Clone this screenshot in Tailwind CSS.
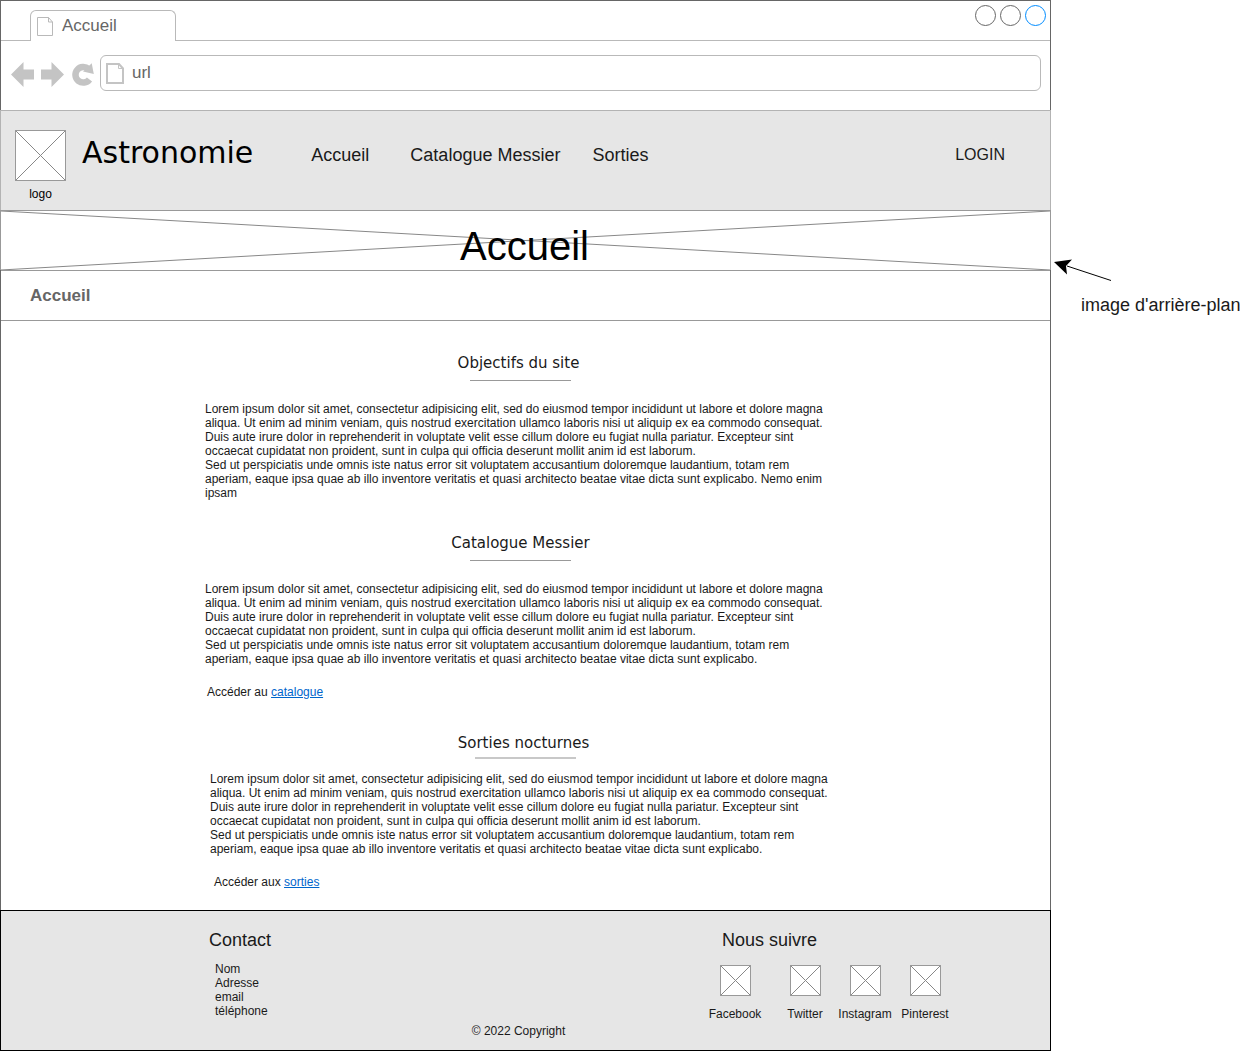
<!DOCTYPE html>
<html lang="fr">
<head>
<meta charset="utf-8">
<meta name="viewport" content="width=device-width, initial-scale=1">
<title>Accueil - Astronomie</title>
<script src="https://cdn.jsdelivr.net/npm/@tailwindcss/browser@4"></script>
</head>
<body class="flex items-start bg-white font-['Liberation_Sans',sans-serif] text-xs leading-[14px] text-black">

<!-- Crossed placeholder, stretched to its box -->
<svg class="hidden">
  <symbol id="cross" viewBox="0 0 100 100" preserveAspectRatio="none">
    <path d="M0 0L100 100M100 0L0 100" fill="none" stroke="#888" stroke-width="1" vector-effect="non-scaling-stroke"/>
  </symbol>
</svg>

<div class="min-w-0 flex-1">

  <!-- Browser chrome -->
  <div class="border-x border-t border-[#666]">
    <div class="flex h-10 items-end">
      <div class="w-[29px] self-stretch border-b border-[#b9b9b9]"></div>
      <div class="flex h-[31px] w-[146px] items-center gap-2 rounded-t-md border-x border-t border-[#b9b9b9] pl-1.5 text-[17px] leading-5 text-[#666]">
        <svg class="h-5 w-[17px] shrink-0" viewBox="0 0 17 20" fill="none" stroke="#b9b9b9"><path d="M.5 1.500H11.500L15.500 6V19.500H.5ZM11.500 1.500V6H15.500"/></svg>
        <span>Accueil</span>
      </div>
      <div class="flex flex-1 justify-end gap-1 self-stretch border-b border-[#b9b9b9] pt-1 pr-1">
        <button aria-label="Réduire" class="size-[21px] rounded-full border border-[#666]"></button>
        <button aria-label="Agrandir" class="size-[21px] rounded-full border border-[#666]"></button>
        <button aria-label="Fermer" class="size-[21px] rounded-full border border-[#008cff]"></button>
      </div>
    </div>
    <div class="flex h-[69px] items-start pt-[14px] pr-[9px] pl-2.5">
      <div class="mr-[5px] flex gap-[7px]">
        <button aria-label="Page précédente"><svg class="h-9 w-[23px]" viewBox="0 0 23 36"><path d="M0 19.500L12.500 7V14.500H23V24.500H12.500V32Z" fill="#c4c4c4"/></svg></button>
        <button aria-label="Page suivante"><svg class="h-9 w-[23px]" viewBox="0 0 23 36"><path d="M23 19.500L10.500 7V14.500H0V24.500H10.500V32Z" fill="#c4c4c4"/></svg></button>
        <button aria-label="Actualiser"><svg class="h-9 w-6" viewBox="0 0 24 36"><path d="M17.500 14A7.800 7.800 0 1 0 18.500 24.500" fill="none" stroke="#c4c4c4" stroke-width="6.500"/><path d="M20.700 8.300L22.800 19L12 16.500Z" fill="#c4c4c4"/></svg></button>
      </div>
      <div class="flex h-9 min-w-0 flex-1 items-center gap-2 rounded-md border border-[#b9b9b9] pl-[5px]">
        <label for="url" aria-label="Adresse"><svg class="h-[21px] w-[18px]" viewBox="0 0 18 21" fill="none" stroke="#c4c4c4"><path d="M1 1H13L17 5.500V20H1Z" stroke-width="2"/><path d="M12.500 1V5.500H17"/></svg></label>
        <input id="url" type="text" value="url" class="min-w-0 flex-1 text-[17px] leading-5 text-[#666] outline-none">
      </div>
    </div>
  </div>

  <!-- Site header -->
  <header class="flex h-[100px] items-start border-x border-t border-[#b3b3b3] bg-[#e6e6e6] pt-[19px] pr-[45px] pl-[14px]">
    <figure class="shrink-0 text-center">
      <div class="size-[51px] border border-[#999] bg-white"><svg class="block size-full"><use href="#cross"/></svg></div>
      <figcaption class="pt-1.5">logo</figcaption>
    </figure>
    <div class="ml-4 font-['DejaVu_Sans',sans-serif] text-[30px] leading-[46px]">Astronomie</div>
    <nav class="ml-[58px] flex text-lg leading-[50px] text-[#1a1a1a]">
      <a href="#" class="mr-[41px]">Accueil</a>
      <a href="#" class="mr-8">Catalogue Messier</a>
      <a href="#">Sorties</a>
    </nav>
    <a href="#" class="ml-auto text-base leading-[50px] text-[#1a1a1a]">LOGIN</a>
  </header>

  <!-- Banner with its background placeholder -->
  <div class="relative h-[60px] border-x border-t border-[#999] pt-3">
    <svg class="absolute inset-0 size-full"><use href="#cross"/></svg>
    <h1 class="relative pr-0.5 text-center text-[40px] leading-[47px]">Accueil</h1>
  </div>

  <div class="border-x border-[#666]">
    <div class="border-y border-[#999] pl-[29px] text-[17px] leading-[49px] font-bold text-[#666]">Accueil</div>

    <main class="flex flex-col gap-[31px] pt-[30px] pb-[21px] pl-[204px] text-[#1a1a1a]">
      <section class="max-w-[631px]">
        <h2 class="pr-1 text-center font-['DejaVu_Sans',sans-serif] text-[15px] leading-6">Objectifs du site</h2>
        <hr class="mx-auto mt-[5px] w-[101px] border-[#999]">
        <p class="mt-[21px] max-w-[622px]">Lorem ipsum dolor sit amet, consectetur adipisicing elit, sed do eiusmod tempor incididunt ut labore et dolore magna aliqua. Ut enim ad minim veniam, quis nostrud exercitation ullamco laboris nisi ut aliquip ex ea commodo consequat. Duis aute irure dolor in reprehenderit in voluptate velit esse cillum dolore eu fugiat nulla pariatur. Excepteur sint occaecat cupidatat non proident, sunt in culpa qui officia deserunt mollit anim id est laborum.<br>Sed ut perspiciatis unde omnis iste natus error sit voluptatem accusantium doloremque laudantium, totam rem aperiam, eaque ipsa quae ab illo inventore veritatis et quasi architecto beatae vitae dicta sunt explicabo. Nemo enim ipsam</p>
      </section>

      <section class="max-w-[631px]">
        <h2 class="text-center font-['DejaVu_Sans',sans-serif] text-[15px] leading-6">Catalogue Messier</h2>
        <hr class="mx-auto mt-[5px] w-[101px] border-[#999]">
        <p class="mt-[21px] max-w-[622px]">Lorem ipsum dolor sit amet, consectetur adipisicing elit, sed do eiusmod tempor incididunt ut labore et dolore magna aliqua. Ut enim ad minim veniam, quis nostrud exercitation ullamco laboris nisi ut aliquip ex ea commodo consequat. Duis aute irure dolor in reprehenderit in voluptate velit esse cillum dolore eu fugiat nulla pariatur. Excepteur sint occaecat cupidatat non proident, sunt in culpa qui officia deserunt mollit anim id est laborum.<br>Sed ut perspiciatis unde omnis iste natus error sit voluptatem accusantium doloremque laudantium, totam rem aperiam, eaque ipsa quae ab illo inventore veritatis et quasi architecto beatae vitae dicta sunt explicabo.</p>
        <p class="mt-[19px] pb-px pl-0.5">Accéder au <a href="#" class="text-[#0066cc] underline">catalogue</a></p>
      </section>

      <section class="ml-[5px] max-w-[631px]">
        <h2 class="pr-1 text-center font-['DejaVu_Sans',sans-serif] text-[15px] leading-6">Sorties nocturnes</h2>
        <hr class="mx-auto mt-0.5 w-[101px] border-t-2 border-[#c8c8c8]">
        <p class="mt-[13px] max-w-[622px]">Lorem ipsum dolor sit amet, consectetur adipisicing elit, sed do eiusmod tempor incididunt ut labore et dolore magna aliqua. Ut enim ad minim veniam, quis nostrud exercitation ullamco laboris nisi ut aliquip ex ea commodo consequat. Duis aute irure dolor in reprehenderit in voluptate velit esse cillum dolore eu fugiat nulla pariatur. Excepteur sint occaecat cupidatat non proident, sunt in culpa qui officia deserunt mollit anim id est laborum.<br>Sed ut perspiciatis unde omnis iste natus error sit voluptatem accusantium doloremque laudantium, totam rem aperiam, eaque ipsa quae ab illo inventore veritatis et quasi architecto beatae vitae dicta sunt explicabo.</p>
        <p class="mt-[19px] pl-1">Accéder aux <a href="#" class="text-[#0066cc] underline">sorties</a></p>
      </section>
    </main>
  </div>

  <!-- Footer -->
  <footer class="border border-black bg-[#e6e6e6] pt-[19px] pb-3 text-[#1a1a1a]">
    <div class="flex justify-between pr-[95px] pl-[208px]">
      <section>
        <h2 class="text-lg leading-5">Contact</h2>
        <ul class="mt-3 pl-1.5">
          <li>Nom</li>
          <li>Adresse</li>
          <li>email</li>
          <li>téléphone</li>
        </ul>
      </section>
      <section>
        <h2 class="pl-[17px] text-lg leading-5">Nous suivre</h2>
        <div class="mt-[15px] flex">
          <a href="#" class="mr-2.5 flex w-15 flex-col items-center gap-[11px]"><span class="size-[31px] border border-[#999] bg-white"><svg class="block size-full"><use href="#cross"/></svg></span>Facebook</a>
          <a href="#" class="flex w-15 flex-col items-center gap-[11px]"><span class="size-[31px] border border-[#999] bg-white"><svg class="block size-full"><use href="#cross"/></svg></span>Twitter</a>
          <a href="#" class="flex w-15 flex-col items-center gap-[11px]"><span class="size-[31px] border border-[#999] bg-white"><svg class="block size-full"><use href="#cross"/></svg></span>Instagram</a>
          <a href="#" class="flex w-15 flex-col items-center gap-[11px]"><span class="size-[31px] border border-[#999] bg-white"><svg class="block size-full"><use href="#cross"/></svg></span>Pinterest</a>
        </div>
      </section>
    </div>
    <p class="mt-[3px] pr-[14px] text-center">© 2022 Copyright</p>
  </footer>
</div>

<!-- Annotation pointing at the banner -->
<aside class="w-[200px] shrink-0 pt-[255px] text-lg leading-5 text-[#1a1a1a]">
  <svg class="block h-10 w-16" viewBox="0 0 64 40"><path d="M16 11L60 25.500" stroke="#000" fill="none"/><path d="M3 7L21 4.500L15 11L16 19.500Z" fill="#000"/></svg>
  <p class="pl-[30px]">image d'arrière-plan</p>
</aside>

</body>
</html>
